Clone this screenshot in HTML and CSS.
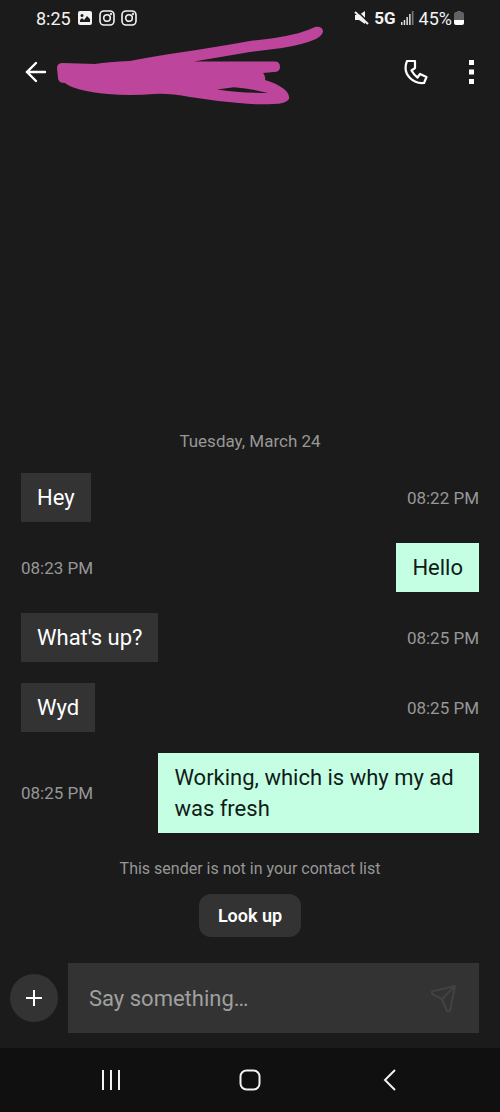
FILE: index.html
```
<!DOCTYPE html>
<html lang="en">

<head>
    <meta charset="utf-8">
    <meta name="viewport" content="width=device-width, initial-scale=1">
    <title>Messages</title>
    <link rel="stylesheet" href="styles.css">
</head>

<body>
    <!-- phone status bar -->
    <div class="status">
        <div class="status-left">
            <span>8:25</span>
            <svg width="16" height="16" viewBox="0 0 16 16">
                <path fill="#f2f2f2" fill-rule="evenodd" d="M3 1h10a2 2 0 0 1 2 2v10a2 2 0 0 1-2 2H3a2 2 0 0 1-2-2V3a2 2 0 0 1 2-2zM3 12h10V9l-3-3-3 4-2-2-2 2zM5 4a1 1 0 1 0 0 3a1 1 0 0 0 0-3z"/>
            </svg>
            <svg width="16" height="16" viewBox="0 0 16 16" fill="none" stroke="#f2f2f2" stroke-width="1.6">
                <rect x="1" y="1" width="14" height="14" rx="4"/><circle cx="8" cy="8" r="3.3"/><circle cx="12" cy="4" r=".4"/>
            </svg>
            <svg width="16" height="16" viewBox="0 0 16 16" fill="none" stroke="#f2f2f2" stroke-width="1.6">
                <rect x="1" y="1" width="14" height="14" rx="4"/><circle cx="8" cy="8" r="3.3"/><circle cx="12" cy="4" r=".4"/>
            </svg>
        </div>
        <div class="status-right">
            <svg width="15" height="16" viewBox="0 0 15 16">
                <path fill="#f2f2f2" d="M1 5h4l6-4v13L5 10H1z"/>
                <path stroke="#1b1b1b" stroke-width="1.6" d="M2 0l13 13"/>
                <path stroke="#f2f2f2" stroke-width="2" d="M1 2l13 12"/>
            </svg>
            <b>5G</b>
            <svg width="13" height="14" viewBox="0 0 13 14" fill="#e0e0e0">
                <path d="M0 11h1.500v3H0zM2.700 9h1.500v5H2.700zM5.400 6h1.500v8H5.400zM8.100 3h1.500v11H8.100z"/><path fill="#777" d="M10.800 0h1.700v14h-1.700z"/>
            </svg>
            <span class="charge">45%
                <svg width="10" height="14" viewBox="0 0 10 14">
                    <path fill="#626262" d="M3 0h4v1h1a2 2 0 0 1 2 2v6H0V3a2 2 0 0 1 2-2h1z"/>
                    <path fill="#fff" d="M0 9h10v3a2 2 0 0 1-2 2H2a2 2 0 0 1-2-2z"/>
                </svg>
            </span>
        </div>
    </div>

    <header class="topbar">
        <button class="icon-btn" aria-label="Back">
            <svg width="22" height="22" viewBox="0 0 22 22" fill="none" stroke="#fff" stroke-width="2.4" stroke-linecap="round">
                <path d="M20 11H2M11 2L2 11l9 9"/>
            </svg>
        </button>
        <!-- marker over the contact name -->
        <svg class="scribble" width="268" height="80" viewBox="56 26 268 80">
            <path fill="#bd469c" fill-rule="evenodd" d="M57 68Q57 63 63 63L95 64Q108 62 130 61Q155 56 190 51Q222 46 250 41Q290 37 308 30L315 27Q322 26 323 31Q323 35 316 39Q302 45 282 48L250 52L194 61.500L274 61.500Q280 61 280 67Q280 72 274 72L263 73Q266 76 265 80Q276 83 284 89Q290 94 289 99Q286 104 273 104Q257 105 239 103Q215 101 190 97Q168 93 154 94Q130 96 108 94Q75 91 65 83Q58 83 58 78zM217 89.500Q240 93 268 93Q253 89 234 87.300z"/>
        </svg>
        <div class="topbar-actions">
            <button class="icon-btn" aria-label="Call">
                <svg width="24" height="26" viewBox="0 0 24 26" fill="none" stroke="#fff" stroke-width="2.2" stroke-linejoin="round">
                    <path d="M3 2Q-1 12 6 19Q12 25 20 24L22.500 18L16 15L13.500 18.500Q10 16 7.500 11.500L11 9V2Z"/>
                </svg>
            </button>
            <button class="icon-btn" aria-label="More options">
                <svg width="7" height="26" viewBox="0 0 7 26" fill="#fff">
                    <path d="M1 1h5v5H1zM1 10.500h5v5H1zM1 20h5v5H1z"/>
                </svg>
            </button>
        </div>
    </header>

    <main class="chat">
        <p class="date">Tuesday, March 24</p>
        <div class="row">
            <p class="bubble">Hey</p>
            <time>08:22 PM</time>
        </div>
        <div class="row sent">
            <p class="bubble">Hello</p>
            <time>08:23 PM</time>
        </div>
        <div class="row">
            <p class="bubble">What's up?</p>
            <time>08:25 PM</time>
        </div>
        <div class="row">
            <p class="bubble">Wyd</p>
            <time>08:25 PM</time>
        </div>
        <div class="row sent">
            <p class="bubble">Working, which is why my ad was fresh</p>
            <time>08:25 PM</time>
        </div>
        <p class="notice">This sender is not in your contact list</p>
        <button class="lookup">Look up</button>
    </main>

    <form class="composer">
        <button type="button" class="add" aria-label="Add attachment">
            <svg width="16" height="16" viewBox="0 0 16 16" stroke="#fff" stroke-width="2"><path d="M0 8h16M8 0v16"/></svg>
        </button>
        <div class="field">
            <input type="text" placeholder="Say something…" aria-label="Message">
            <button type="button" class="icon-btn" aria-label="Send">
                <svg width="28" height="30" viewBox="0 0 28 30" fill="none" stroke="#424242" stroke-width="2" stroke-linejoin="round">
                    <path d="M25 3L2 8.500V11L12 16L17 28H20zM12 16L24 4"/>
                </svg>
            </button>
        </div>
    </form>

    <nav class="sysnav">
        <button class="icon-btn" aria-label="Recent apps">
            <svg width="22" height="22" viewBox="0 0 22 22" stroke="#f2f2f2" stroke-width="2"><path d="M3 1v20M11 1v20M19 1v20"/></svg>
        </button>
        <button class="icon-btn" aria-label="Home">
            <svg width="22" height="22" viewBox="0 0 22 22" fill="none" stroke="#f2f2f2" stroke-width="2"><rect x="1.500" y="1.500" width="19" height="19" rx="6"/></svg>
        </button>
        <button class="icon-btn" aria-label="Go back">
            <svg width="22" height="22" viewBox="0 0 22 22" fill="none" stroke="#f2f2f2" stroke-width="2"><path d="M17 1L7 11l10 10"/></svg>
        </button>
    </nav>
</body>

</html>
```
FILE: styles.css
```
* { box-sizing: border-box; }

body {
    margin: 0;
    min-height: 100vh;
    display: flex;
    flex-direction: column;
    background: #1b1b1b;
    color: #fff;
    font-family: Roboto, "Liberation Sans", sans-serif;
}

p { margin: 0; }
svg { display: block; flex: none; }

button, input {
    font-family: inherit;
    color: inherit;
    border: 0;
}
.icon-btn {
    padding: 0;
    background: none;
}

/* status bar */
.status {
    display: flex;
    justify-content: space-between;
    align-items: center;
    height: 36px;
    padding: 0 36px;
    font-size: 18px;
    color: #f2f2f2;
}
.status-left, .status-right, .charge {
    display: flex;
    align-items: center;
}
.status-left { gap: 6px; }
.status-right { gap: 5px; }
.charge { gap: 2px; }
.status b { font-size: 17px; }

/* header */
.topbar {
    position: relative;
    display: flex;
    justify-content: space-between;
    align-items: center;
    height: 72px;
    padding: 0 25px;
}
.topbar-actions {
    display: flex;
    gap: 40px;
}
.scribble {
    position: absolute;
    left: 56px;
    top: -10px;
}

/* messages */
.chat {
    flex: 1;
    display: flex;
    flex-direction: column;
    justify-content: flex-end;
    gap: 21px;
    padding: 0 21px 26px;
}
.date, .notice, time {
    font-size: 17px;
    line-height: 22px;
    color: #979797;
}
.date, .notice { text-align: center; }
.row {
    display: flex;
    justify-content: space-between;
    align-items: center;
}
.sent { flex-direction: row-reverse; }
.bubble {
    max-width: 70%;
    padding: 9px 16px;
    background: #333;
    font-size: 22px;
    line-height: 31px;
}
.sent .bubble {
    background: #c5ffe3;
    color: #101c17;
}
.notice {
    font-size: 16px;
    margin: 4px 0 -7px;
}
.lookup {
    align-self: center;
    padding: 11px 19px;
    border-radius: 12px;
    background: #333;
    font-size: 18px;
    line-height: 21px;
    font-weight: 600;
}

/* composer */
.composer {
    display: flex;
    align-items: center;
    gap: 10px;
    padding: 0 21px 15px 10px;
}
.add {
    display: grid;
    place-items: center;
    flex: none;
    width: 48px;
    height: 48px;
    padding: 0;
    border-radius: 50%;
    background: #333;
}
.field {
    flex: 1;
    display: flex;
    align-items: center;
    padding: 0 21px;
    background: #333;
}
.field input {
    flex: 1;
    min-width: 0;
    height: 70px;
    padding: 0;
    background: none;
    outline: none;
    font-size: 22px;
}
.field input::placeholder { color: #a0a0a0; }

/* system buttons */
.sysnav {
    display: flex;
    justify-content: space-between;
    align-items: center;
    height: 64px;
    padding: 0 20%;
    background: #101010;
}
```
